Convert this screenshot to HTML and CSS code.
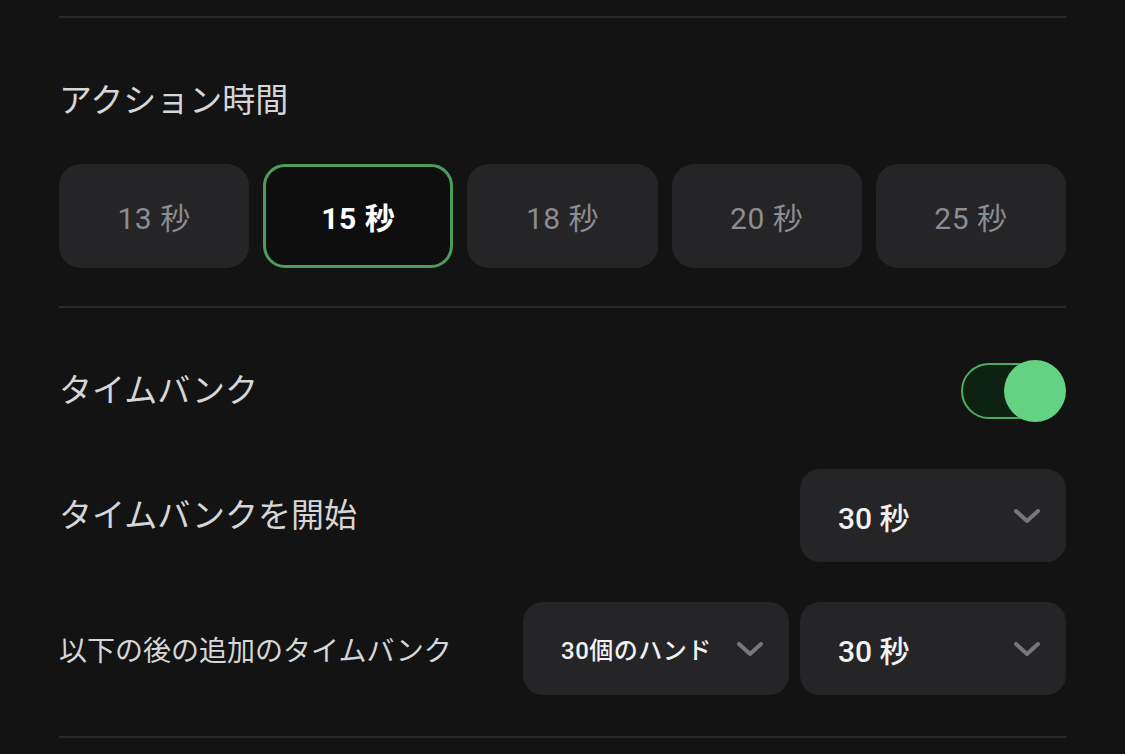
FILE: index.html
```html
<!DOCTYPE html>
<html lang="ja">
<head>
    <meta charset="UTF-8">
    <meta name="viewport" content="width=device-width, initial-scale=1.0">
    <title>タイム設定</title>
    <link rel="stylesheet" href="styles.css">
</head>
<body>
    <div class="container">
        <div class="divider top"></div>

        <div class="section action-time">
            <h2 class="title">アクション時間</h2>
            <div class="choices">
                <button class="choice">13 秒</button>
                <button class="choice selected">15 秒</button>
                <button class="choice">18 秒</button>
                <button class="choice">20 秒</button>
                <button class="choice">25 秒</button>
            </div>
        </div>

        <div class="divider"></div>

        <div class="section timebank">
            <div class="row toggle-row">
                <span class="title">タイムバンク</span>
                <div class="toggle on">
                    <div class="track"></div>
                    <div class="knob"></div>
                </div>
            </div>

            <div class="row">
                <span class="title">タイムバンクを開始</span>
                <div class="select">
                    <span>30 秒</span>
                    <svg class="chevron" width="26" height="14" viewBox="0 0 26 14"><path d="M2 2 L13 12 L24 2" fill="none" stroke="currentColor" stroke-width="4" stroke-linecap="round" stroke-linejoin="round"/></svg>
                </div>
            </div>

            <div class="row">
                <span class="label">以下の後の追加のタイムバンク</span>
                <div class="selects">
                    <div class="select small">
                        <span>30個のハンド</span>
                        <svg class="chevron" width="26" height="14" viewBox="0 0 26 14"><path d="M2 2 L13 12 L24 2" fill="none" stroke="currentColor" stroke-width="4" stroke-linecap="round" stroke-linejoin="round"/></svg>
                    </div>
                    <div class="select">
                        <span>30 秒</span>
                        <svg class="chevron" width="26" height="14" viewBox="0 0 26 14"><path d="M2 2 L13 12 L24 2" fill="none" stroke="currentColor" stroke-width="4" stroke-linecap="round" stroke-linejoin="round"/></svg>
                    </div>
                </div>
            </div>
        </div>

        <div class="divider"></div>
    </div>
</body>
</html>
```

FILE: styles.css
```css
body {
    margin: 0;
    background-color: #131314;
    color: #d4d4d6;
    font-family: Roboto, "Noto Sans CJK JP", sans-serif;
}
.container {
    padding: 16px 59px 0;
}
.divider {
    height: 2px;
    background-color: #2a2a2c;
}
.section {
    display: flex;
    flex-direction: column;
}
.action-time {
    padding: 63px 0 38px;
    gap: 43px;
}
.title {
    margin: 0;
    font-size: 33px;
    font-weight: 400;
    line-height: 40px;
    color: #d6d6d8;
}
.choices {
    display: grid;
    grid-template-columns: repeat(5, 1fr);
    gap: 14px;
}
.choice {
    height: 104px;
    border: 3px solid transparent;
    border-radius: 22px;
    background-color: #252527;
    color: #8c8c91;
    font-family: Roboto, "Noto Sans CJK JP", sans-serif;
    font-size: 30px;
    letter-spacing: 0.5px;
    cursor: pointer;
}
.choice.selected {
    border-color: #4e9c5c;
    background-color: #0e0e0f;
    color: #ffffff;
    font-weight: 700;
}
.timebank {
    padding: 52px 0 41px;
    gap: 40px;
}
.row {
    display: flex;
    align-items: center;
    justify-content: space-between;
}
.toggle-row {
    margin-bottom: 7px;
}
.toggle {
    position: relative;
    width: 105px;
    height: 62px;
}
.track {
    position: absolute;
    left: 0;
    top: 3px;
    width: 80px;
    height: 52px;
    border: 2px solid #4cab60;
    border-radius: 30px;
    background-color: #0d2212;
}
.knob {
    position: absolute;
    right: 0;
    top: 0;
    width: 62px;
    height: 62px;
    border-radius: 50%;
    background-color: #63d383;
}
.select {
    width: 266px;
    height: 93px;
    box-sizing: border-box;
    padding: 0 26px 0 38px;
    display: flex;
    align-items: center;
    justify-content: space-between;
    border-radius: 20px;
    background-color: #252527;
    color: #f2f2f4;
    font-size: 30px;
    font-weight: 500;
}
.select.small {
    font-size: 24px;
    letter-spacing: 0.5px;
}
.chevron {
    color: #77777b;
}
.selects {
    display: flex;
    gap: 11px;
}
.label {
    font-size: 28px;
    color: #d6d6d8;
}
```
